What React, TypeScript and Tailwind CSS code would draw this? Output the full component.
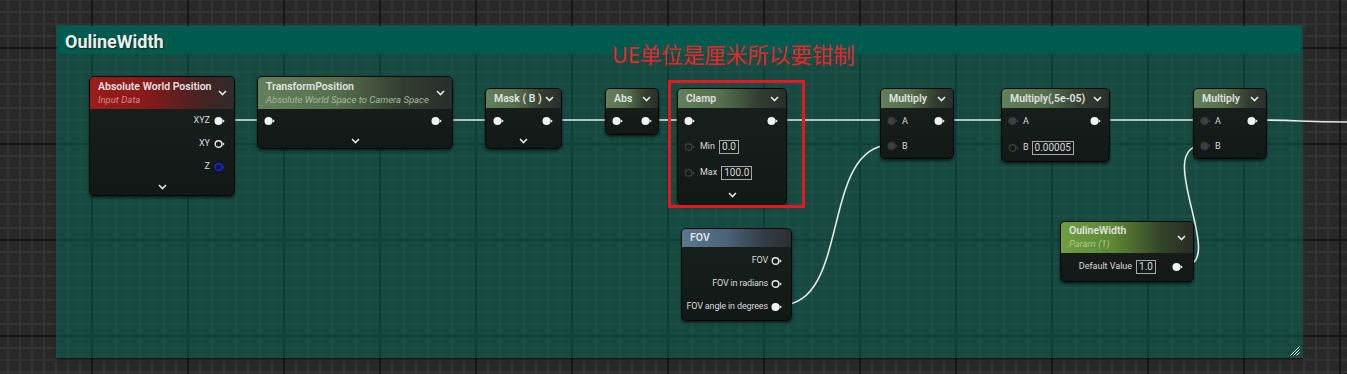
import type { ReactNode } from "react";

type PinKind = "filled" | "hollow" | "blue" | "gray" | "dim";

function Pin({ kind }: { kind: PinKind }) {
	const stroke =
		kind === "hollow" ? "#e8e8e8" : kind === "blue" ? "#1a22ff" : kind === "dim" ? "#3c3c3c" : "none";
	const fill = kind === "filled" ? "#f2f2f2" : kind === "gray" ? "#3d3d3d" : "none";
	const tip = kind === "filled" ? "#f2f2f2" : kind === "gray" ? "#3d3d3d" : kind === "dim" ? "#3c3c3c" : stroke;
	return (
		<svg width="12" height="10" viewBox="0 0 12 10" className="shrink-0">
			<circle cx="4.5" cy="5" r={kind === "filled" || kind === "gray" ? 4 : 3.3} fill={fill} stroke={stroke} strokeWidth="1.4" />
			<polygon points="8.6,3.2 10.8,5 8.6,6.8" fill={tip} />
		</svg>
	);
}

function Chevron() {
	return (
		<svg width="9" height="6" viewBox="0 0 9 6" className="shrink-0">
			<polyline points="1,1 4.5,4.5 8,1" fill="none" stroke="#e6e6e6" strokeWidth="1.6" />
		</svg>
	);
}

function ValueBox({ children }: { children: ReactNode }) {
	return (
		<span className="border border-[#a8a8a8] px-[2px] h-[14px] flex items-center text-[10px] leading-none text-[#d8d8d8]">
			{children}
		</span>
	);
}

const heads = {
	green: "bg-[linear-gradient(90deg,#62805a_0%,#55704d_40%,#323d30_75%,#2a2e2a_100%)]",
	red: "bg-[linear-gradient(90deg,#9e1b1b_0%,#861a1a_40%,#4a2222_75%,#2e2b2b_100%)]",
	blue: "bg-[linear-gradient(90deg,#58788f_0%,#4a6479_40%,#333d46_75%,#2b2e31_100%)]",
	param: "bg-[linear-gradient(90deg,#6f9f40_0%,#5c8735_40%,#34452a_75%,#272b25_100%)]",
};

function Node({
	className,
	head,
	title,
	subtitle,
	headH,
	chevron = true,
	children,
}: {
	className: string;
	head: keyof typeof heads;
	title: string;
	subtitle?: string;
	headH: string;
	chevron?: boolean;
	children: ReactNode;
}) {
	return (
		<div
			className={`absolute flex flex-col rounded-[5px] border border-[#050707] bg-[linear-gradient(180deg,#18201e_0%,#121816_100%)] shadow-[0_2px_3px_rgba(0,0,0,0.55)] overflow-hidden ${className}`}
		>
			<div className={`${heads[head]} ${headH} flex items-center justify-between pl-[8px] pr-[7px] shrink-0`}>
				<div className="flex flex-col">
					<span className="text-[10.5px] leading-[12px] font-semibold text-[#e2e2e2] whitespace-nowrap">{title}</span>
					{subtitle && (
						<span
							className={`text-[9.5px] leading-[12px] italic mt-[1px] whitespace-nowrap ${
								head === "red" ? "text-[#cf8a8a]" : head === "param" ? "text-[#a9c98a]" : "text-[#a9b99c]"
							}`}
						>
							{subtitle}
						</span>
					)}
				</div>
				{chevron && <Chevron />}
			</div>
			{children}
		</div>
	);
}

const label = "text-[9px] leading-none text-[#dadada] whitespace-nowrap";

export default function App() {
	return (
		<div
			className="relative w-[1347px] h-[374px] overflow-hidden bg-[#282828] [background-image:linear-gradient(90deg,#161616_2px,transparent_2px),linear-gradient(#161616_2px,transparent_2px),linear-gradient(90deg,#343434_2px,transparent_2px),linear-gradient(#343434_2px,transparent_2px)] [background-size:96px_96px,96px_96px,12px_12px,12px_12px] [background-position:91px_0,0_47px,7px_0,0_11px]"
			style={{ fontFamily: "Roboto, 'Noto Sans', sans-serif" }}
		>
			{/* comment box */}
			<div className="absolute left-[56px] top-[25px] w-[1247px] h-[333px] bg-[rgba(0,112,94,0.45)] shadow-[0_2px_3px_rgba(0,0,0,0.5)] flex flex-col">
				<div className="mx-[2px] mt-[1px] h-[28px] bg-[#005a4e] flex items-center pl-[7px] pt-[2px]">
					<span className="text-[18px] font-bold text-[#ededed] [text-shadow:1px_1px_1px_rgba(0,0,0,0.6)]">
						OulineWidth
					</span>
				</div>
				<div className="flex-1 flex items-end justify-end pr-[3px] pb-[2px]">
					<svg width="10" height="10" viewBox="0 0 10 10">
						<g stroke="#f0f0f0" strokeWidth="1">
							<line x1="0.5" y1="9.5" x2="9.5" y2="0.5" />
							<line x1="3.5" y1="9.5" x2="9.5" y2="3.5" />
							<line x1="6.5" y1="9.5" x2="9.5" y2="6.5" />
						</g>
					</svg>
				</div>
			</div>

			{/* wires */}
			<svg className="absolute left-0 top-0" width="1347" height="374">
				<g stroke="#e8e8e8" strokeWidth="1.6" fill="none">
					<path d="M222 120 L268 120" />
					<path d="M440 120 L497 120" />
					<path d="M551 120 L616 120" />
					<path d="M650 120 L688 120" />
					<path d="M776 120 L891 120" />
					<path d="M943 120 L1012 120" />
					<path d="M1100 120 L1204 120" />
					<path d="M1255 120 C1300 120 1300 122 1347 122" />
					<path d="M781 305 C851 305 820 145 891 145" />
					<path d="M1183 266 C1230 266 1150 145 1204 145" />
				</g>
			</svg>

			{/* Absolute World Position */}
			<Node className="left-[89px] top-[76px] w-[146px]" head="red" title="Absolute World Position" subtitle="Input Data" headH="h-[32px]">
				<div className="h-[23px] flex items-center justify-end gap-[4px] pr-[8px]">
					<span className={label}>XYZ</span>
					<Pin kind="filled" />
				</div>
				<div className="h-[23px] flex items-center justify-end gap-[4px] pr-[8px]">
					<span className={label}>XY</span>
					<Pin kind="hollow" />
				</div>
				<div className="h-[23px] flex items-center justify-end gap-[4px] pr-[8px]">
					<span className={label}>Z</span>
					<Pin kind="blue" />
				</div>
				<div className="h-[17px] flex items-center justify-center">
					<Chevron />
				</div>
			</Node>

			{/* TransformPosition */}
			<Node
				className="left-[257px] top-[76px] w-[196px]"
				head="green"
				title="TransformPosition"
				subtitle="Absolute World Space to Camera Space"
				headH="h-[32px]"
			>
				<div className="h-[24px] flex items-center justify-between pl-[6px] pr-[9px]">
					<Pin kind="filled" />
					<Pin kind="filled" />
				</div>
				<div className="h-[15px] flex items-center justify-center">
					<Chevron />
				</div>
			</Node>

			{/* Mask */}
			<Node className="left-[485px] top-[88px] w-[77px]" head="green" title="Mask ( B )" headH="h-[19px]">
				<div className="h-[26px] flex items-center justify-between pl-[7px] pr-[7px]">
					<Pin kind="filled" />
					<Pin kind="filled" />
				</div>
				<div className="h-[14px] flex items-center justify-center">
					<Chevron />
				</div>
			</Node>

			{/* Abs */}
			<Node className="left-[605px] top-[88px] w-[54px]" head="green" title="Abs" headH="h-[19px]">
				<div className="h-[26px] flex items-center justify-between pl-[6px] pr-[5px]">
					<Pin kind="filled" />
					<Pin kind="filled" />
				</div>
			</Node>

			{/* Clamp */}
			<Node className="left-[677px] top-[88px] w-[110px]" head="green" title="Clamp" headH="h-[19px]">
				<div className="h-[26px] flex items-center justify-between pl-[6px] pr-[7px]">
					<Pin kind="filled" />
					<Pin kind="filled" />
				</div>
				<div className="h-[25px] flex items-center gap-[4px] pl-[6px]">
					<Pin kind="dim" />
					<span className={label}>Min</span>
					<ValueBox>0.0</ValueBox>
				</div>
				<div className="h-[27px] flex items-center gap-[4px] pl-[6px]">
					<Pin kind="dim" />
					<span className={label}>Max</span>
					<ValueBox>100.0</ValueBox>
				</div>
				<div className="h-[18px] flex items-center justify-center">
					<Chevron />
				</div>
			</Node>

			{/* Multiply 1 */}
			<Node className="left-[880px] top-[88px] w-[74px]" head="green" title="Multiply" headH="h-[19px]">
				<div className="h-[26px] flex items-center pl-[6px] pr-[7px]">
					<Pin kind="gray" />
					<span className={`${label} ml-[3px]`}>A</span>
					<span className="flex-1" />
					<Pin kind="filled" />
				</div>
				<div className="h-[24px] flex items-center pl-[6px]">
					<Pin kind="gray" />
					<span className={`${label} ml-[3px]`}>B</span>
				</div>
			</Node>

			{/* Multiply 2 */}
			<Node className="left-[1001px] top-[88px] w-[109px]" head="green" title="Multiply(,5e-05)" headH="h-[19px]">
				<div className="h-[26px] flex items-center pl-[6px] pr-[7px]">
					<Pin kind="gray" />
					<span className={`${label} ml-[3px]`}>A</span>
					<span className="flex-1" />
					<Pin kind="filled" />
				</div>
				<div className="h-[27px] flex items-center gap-[3px] pl-[6px]">
					<Pin kind="dim" />
					<span className={label}>B</span>
					<ValueBox>0.00005</ValueBox>
				</div>
			</Node>

			{/* Multiply 3 */}
			<Node className="left-[1193px] top-[88px] w-[74px]" head="green" title="Multiply" headH="h-[19px]">
				<div className="h-[26px] flex items-center pl-[6px] pr-[7px]">
					<Pin kind="gray" />
					<span className={`${label} ml-[3px]`}>A</span>
					<span className="flex-1" />
					<Pin kind="filled" />
				</div>
				<div className="h-[24px] flex items-center pl-[6px]">
					<Pin kind="gray" />
					<span className={`${label} ml-[3px]`}>B</span>
				</div>
			</Node>

			{/* FOV */}
			<Node className="left-[681px] top-[228px] w-[111px]" head="blue" title="FOV" headH="h-[18px]" chevron={false}>
				<div className="pt-[2px] pb-[2px] flex flex-col">
					{[
						["FOV", "hollow"],
						["FOV in radians", "hollow"],
						["FOV angle in degrees", "filled"],
					].map(([t, k]) => (
						<div key={t} className="h-[23px] flex items-center justify-end gap-[3px] pr-[8px]">
							<span className={`${label} tracking-[-0.15px]`}>{t}</span>
							<Pin kind={k as PinKind} />
						</div>
					))}
				</div>
			</Node>

			{/* OulineWidth param */}
			<Node className="left-[1060px] top-[221px] w-[134px]" head="param" title="OulineWidth" subtitle="Param (1)" headH="h-[31px]">
				<div className="h-[28px] flex items-center justify-end gap-[4px] pr-[9px] pb-[1px]">
					<span className={label}>Default Value</span>
					<ValueBox>1.0</ValueBox>
					<span className="w-[8px]" />
					<Pin kind="filled" />
				</div>
			</Node>

			{/* annotation */}
			<div
				className="absolute left-[612px] top-[41px] text-[21.5px] leading-[28px] font-normal text-[#e8262a]"
				style={{ fontFamily: "'Noto Sans', 'Noto Sans CJK SC', sans-serif" }}
			>
				UE单位是厘米所以要钳制
			</div>
			<div className="absolute left-[668px] top-[80px] w-[137px] h-[128px] border-[3px] border-[#e8161e]" />
		</div>
	);
}
